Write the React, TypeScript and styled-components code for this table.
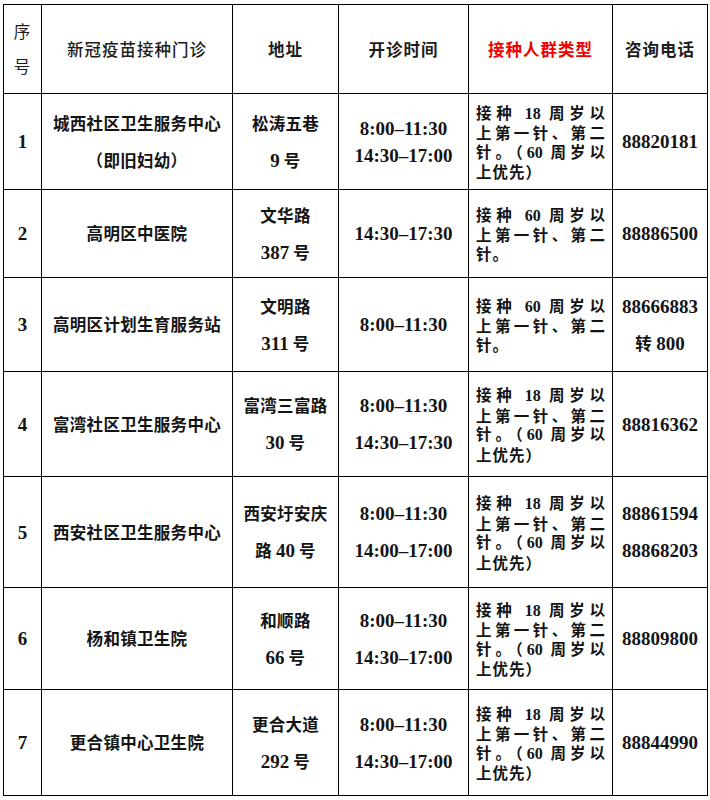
import React from 'react';
import styled, { createGlobalStyle } from 'styled-components';

const GlobalStyle = createGlobalStyle`
  body {
    margin: 0;
    background: #fff;
    font-family: "Noto Sans CJK SC", "Noto Sans", sans-serif;
    color: #141414;
  }
`;

type Clinic = {
  no: number;
  name: React.ReactNode;
  address: React.ReactNode;
  hours: React.ReactNode;
  hoursLh?: number;
  group: 'all' | 'senior';
  phone: React.ReactNode;
  height: number;
};

const Page = styled.div`
  padding: 4px 0 0 3px;
`;

const Table = styled.table`
  border-collapse: collapse;
  table-layout: fixed;
  width: 704px;
`;

const Row = styled.tr<{ $h: number }>`
  height: ${({ $h }) => $h}px;
`;

const Head = styled.th<{ $weight?: number; $red?: boolean; $lh?: number }>`
  border: 1px solid #000;
  padding: 0;
  text-align: center;
  vertical-align: middle;
  font-size: 16.5px;
  letter-spacing: 1px;
  line-height: ${({ $lh }) => $lh ?? 24}px;
  font-weight: ${({ $weight }) => $weight ?? 700};
  color: ${({ $red }) => ($red ? '#f20000' : '#1c1c1c')};
`;

const Cell = styled.td<{ $lh?: number }>`
  border: 1px solid #000;
  padding: 0;
  text-align: center;
  vertical-align: middle;
  font-size: 16.5px;
  font-weight: 700;
  line-height: ${({ $lh }) => $lh ?? 37}px;
  letter-spacing: 0.3px;
`;

const GroupCell = styled.td`
  border: 1px solid #000;
  padding: 0 6px 0 7px;
  vertical-align: middle;
  font-size: 15.5px;
  font-weight: 700;
  line-height: 18.5px;
`;

const GroupLine = styled.span<{ $last?: boolean }>`
  display: block;
  text-align: ${({ $last }) => ($last ? 'left' : 'justify')};
  text-align-last: ${({ $last }) => ($last ? 'left' : 'justify')};
  letter-spacing: 1px;
  white-space: nowrap;
`;

const Num = styled.span<{ $size?: number }>`
  font-family: "Liberation Serif", "Times New Roman", serif;
  font-size: ${({ $size }) => $size ?? 19}px;
  letter-spacing: 0;
`;

const N = ({ children }: { children: React.ReactNode }) => <Num>{children}</Num>;

const Group = ({ kind }: { kind: 'all' | 'senior' }) =>
  kind === 'all' ? (
    <>
      <GroupLine>接种 <Num $size={16}>18</Num> 周岁以</GroupLine>
      <GroupLine>上第一针、第二</GroupLine>
      <GroupLine>针。（<Num $size={16}>60</Num> 周岁以</GroupLine>
      <GroupLine $last>上优先）</GroupLine>
    </>
  ) : (
    <>
      <GroupLine>接种 <Num $size={16}>60</Num> 周岁以</GroupLine>
      <GroupLine>上第一针、第二</GroupLine>
      <GroupLine $last>针。</GroupLine>
    </>
  );

const clinics: Clinic[] = [
  {
    no: 1,
    name: <>城西社区卫生服务中心<br />（即旧妇幼）</>,
    address: <>松涛五巷<br /><N>9</N> 号</>,
    hours: <><N>8:00–11:30</N><br /><N>14:30–17:00</N></>,
    hoursLh: 27,
    group: 'all',
    phone: <N>88820181</N>,
    height: 96,
  },
  {
    no: 2,
    name: '高明区中医院',
    address: <>文华路<br /><N>387</N> 号</>,
    hours: <N>14:30–17:30</N>,
    group: 'senior',
    phone: <N>88886500</N>,
    height: 88,
  },
  {
    no: 3,
    name: '高明区计划生育服务站',
    address: <>文明路<br /><N>311</N> 号</>,
    hours: <N>8:00–11:30</N>,
    group: 'senior',
    phone: <><N>88666883</N><br />转 <N>800</N></>,
    height: 94,
  },
  {
    no: 4,
    name: '富湾社区卫生服务中心',
    address: <>富湾三富路<br /><N>30</N> 号</>,
    hours: <><N>8:00–11:30</N><br /><N>14:30–17:30</N></>,
    group: 'all',
    phone: <N>88816362</N>,
    height: 105,
  },
  {
    no: 5,
    name: '西安社区卫生服务中心',
    address: <>西安圩安庆<br />路 <N>40</N> 号</>,
    hours: <><N>8:00–11:30</N><br /><N>14:00–17:00</N></>,
    group: 'all',
    phone: <><N>88861594</N><br /><N>88868203</N></>,
    height: 111,
  },
  {
    no: 6,
    name: '杨和镇卫生院',
    address: <>和顺路<br /><N>66</N> 号</>,
    hours: <><N>8:00–11:30</N><br /><N>14:30–17:00</N></>,
    group: 'all',
    phone: <N>88809800</N>,
    height: 102,
  },
  {
    no: 7,
    name: '更合镇中心卫生院',
    address: <>更合大道<br /><N>292</N> 号</>,
    hours: <><N>8:00–11:30</N><br /><N>14:30–17:00</N></>,
    group: 'all',
    phone: <N>88844990</N>,
    height: 106,
  },
];

export default function App() {
  return (
    <Page>
      <GlobalStyle />
      <Table>
        <colgroup>
          <col style={{ width: 38 }} />
          <col style={{ width: 191 }} />
          <col style={{ width: 106 }} />
          <col style={{ width: 130 }} />
          <col style={{ width: 144 }} />
          <col style={{ width: 95 }} />
        </colgroup>
        <thead>
          <Row $h={89}>
            <Head $weight={400} $lh={35}>序<br />号</Head>
            <Head $weight={500}>新冠疫苗接种门诊</Head>
            <Head>地址</Head>
            <Head>开诊时间</Head>
            <Head $red>接种人群类型</Head>
            <Head>咨询电话</Head>
          </Row>
        </thead>
        <tbody>
          {clinics.map((c) => (
            <Row key={c.no} $h={c.height}>
              <Cell><N>{c.no}</N></Cell>
              <Cell>{c.name}</Cell>
              <Cell>{c.address}</Cell>
              <Cell $lh={c.hoursLh}>{c.hours}</Cell>
              <GroupCell><Group kind={c.group} /></GroupCell>
              <Cell>{c.phone}</Cell>
            </Row>
          ))}
        </tbody>
      </Table>
    </Page>
  );
}
